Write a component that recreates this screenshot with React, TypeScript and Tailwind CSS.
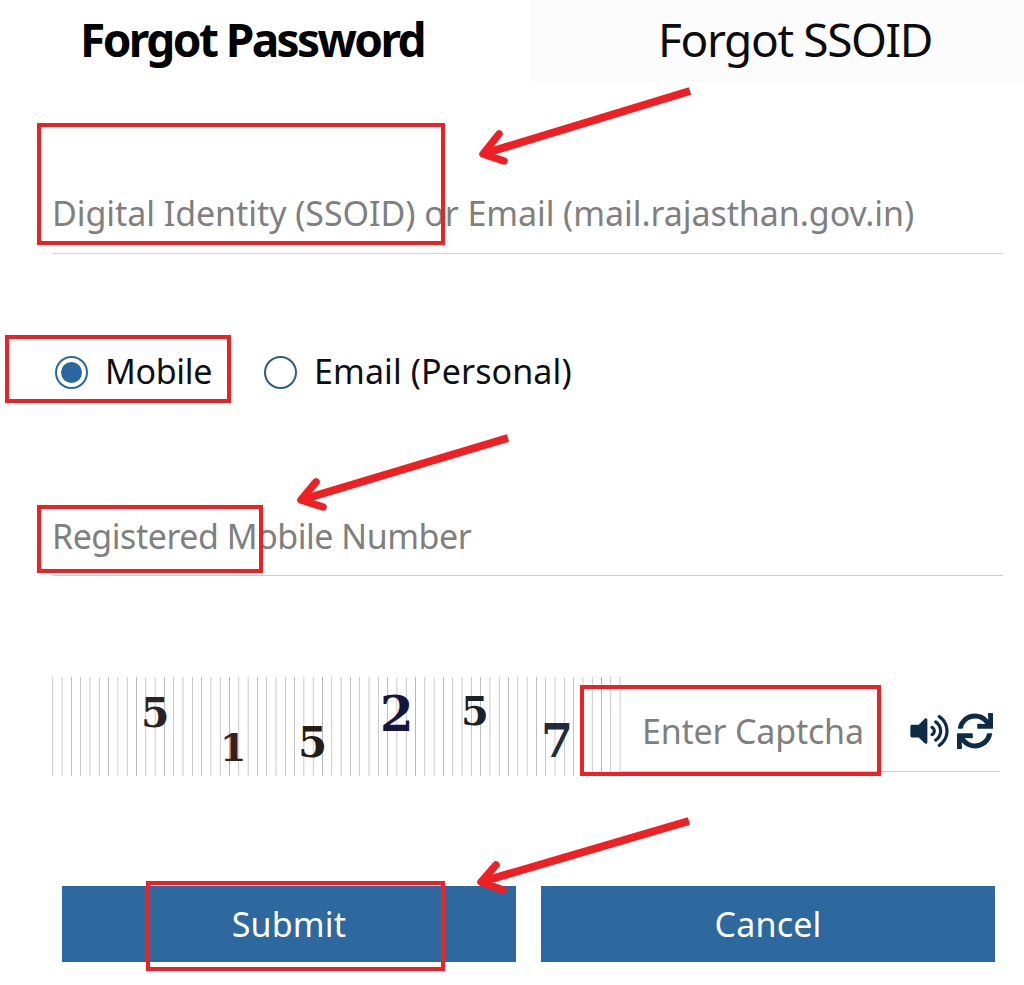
import { FaVolumeUp, FaSync } from "react-icons/fa";

function Arrow({ tail, tip, b1, b2 }: { tail: string; tip: string; b1: string; b2: string }) {
  return (
    <g fill="none" stroke="#ee2024" strokeLinecap="round" strokeLinejoin="round">
      <path d={`M${tail} L${tip}`} strokeWidth="8" strokeLinecap="butt" />
      <path d={`M${b1} L${tip} L${b2}`} strokeWidth="7.5" />
    </g>
  );
}

function Digit({ c, className }: { c: string; className: string }) {
  return <span className={`absolute font-['DejaVu_Serif',serif] font-bold leading-none tracking-normal ${className}`}>{c}</span>;
}

export default function App() {
  return (
    <div className="relative w-[1024px] h-[985px] overflow-hidden bg-white font-['Noto_Sans',sans-serif]">
      {/* Tabs */}
      <div className="flex h-[82px]">
        <div className="w-[530px] pl-[80px] pt-[10px]">
          <h1 className="text-[46px] leading-[58px] font-bold text-black tracking-[-0.0565em] whitespace-nowrap">Forgot Password</h1>
        </div>
        <div className="flex-1 bg-[#fcfcfc] pl-[128px] pt-[10px]">
          <h2 className="text-[46px] leading-[58px] font-normal text-[#0c0c0c] tracking-[-0.03em] whitespace-nowrap">Forgot SSOID</h2>
        </div>
      </div>

      {/* SSOID */}
      <div className="ml-[52px] mr-[21px] mt-[107px] h-[65px] border-b border-[#d4d6d8] flex">
        <span className="text-[34px] leading-[48px] text-[#7f7f80] tracking-[-0.002em] whitespace-nowrap">Digital Identity (SSOID) or Email (mail.rajasthan.gov.in)</span>
      </div>

      {/* Radios */}
      <div className="mt-[96px] ml-[55px] h-[44px] flex items-center">
        <span className="w-[33px] h-[33px] rounded-full border-2 border-[#2b679f] flex items-center justify-center">
          <span className="w-[21px] h-[21px] rounded-full bg-[#2b679f]" />
        </span>
        <span className="ml-[17px] pb-[2px] text-[34px] leading-[44px] text-[#0c0f14] tracking-[-0.01em]">Mobile</span>
        <span className="ml-[52px] w-[33px] h-[33px] rounded-full border-2 border-[#2b5d85]" />
        <span className="ml-[17px] pb-[2px] text-[34px] leading-[44px] text-[#0c0f14] tracking-[0.003em] whitespace-nowrap">Email (Personal)</span>
      </div>

      {/* Mobile number */}
      <div className="ml-[52px] mr-[21px] mt-[117px] h-[65px] border-b border-[#c9cbcc]">
        <span className="block text-[34px] leading-[50px] text-[#7f7f80] tracking-[-0.014em] whitespace-nowrap">Registered Mobile Number</span>
      </div>

      {/* Captcha */}
      <div className="mt-[101px] ml-[52px] mr-[24px] h-[99px] flex">
        <div className="relative w-[569px] h-[99px] bg-[repeating-linear-gradient(90deg,#ffffff_0,#b8b8b8_0.8px,#ffffff_1.6px,#ffffff_9.3px)]">
          <Digit c="5" className="left-[89px] top-[16px] text-[41px] text-[#2a2324]" />
          <Digit c="1" className="left-[168px] top-[52px] text-[38px] text-[#35201d]" />
          <Digit c="5" className="left-[246px] top-[45px] text-[42px] text-[#221d18]" />
          <Digit c="2" className="left-[328px] top-[13px] text-[48px] text-[#14163f]" />
          <Digit c="5" className="left-[409px] top-[14px] text-[40px] text-[#1b2029]" />
          <Digit c="7" className="left-[489px] top-[41px] text-[46px] text-[#222b3d]" />
        </div>
        <div className="flex-1 flex items-start">
          <div className="flex-1 h-[95px] border-b border-[#c9cbcc] flex items-center relative">
            <span className="absolute left-[21px] top-[31px] text-[34px] leading-[46px] text-[#7f7f80] tracking-[-0.006em] whitespace-nowrap">Enter Captcha</span>
            <div className="ml-auto mr-[7px] mt-[14px] flex items-center gap-[8px] text-[#0e2c46]">
              <FaVolumeUp className="w-[39px] h-[34px]" />
              <FaSync className="w-[36px] h-[36px]" />
            </div>
          </div>
        </div>
      </div>

      {/* Buttons */}
      <div className="mt-[110px] ml-[62px] flex gap-[25px]">
        <button className="w-[454px] h-[76px] bg-[#2d689f] text-white text-[34px] tracking-[0.005em]">Submit</button>
        <button className="w-[454px] h-[76px] bg-[#2d689f] text-white text-[34px] tracking-[0.005em]">Cancel</button>
      </div>

      {/* Annotations */}
      <div className="absolute left-[37px] top-[123px] w-[408px] h-[122px] border-[4px] border-[#ee2024]" />
      <div className="absolute left-[5px] top-[335px] w-[226px] h-[68px] border-[4px] border-[#ee2024]" />
      <div className="absolute left-[37px] top-[505px] w-[226px] h-[68px] border-[4px] border-[#ee2024]" />
      <div className="absolute left-[580px] top-[685px] w-[301px] h-[91px] border-[4px] border-[#ee2024]" />
      <div className="absolute left-[146px] top-[881px] w-[299px] h-[90px] border-[4px] border-[#ee2024]" />
      <svg className="absolute left-0 top-0 pointer-events-none" width="1024" height="985" viewBox="0 0 1024 985">
        <Arrow tail="690,91" tip="483,154" b1="499,134" b2="504,161" />
        <Arrow tail="508,438" tip="301,500" b1="316,482" b2="323,507" />
        <Arrow tail="689,821" tip="481,882" b1="496,865" b2="503,890" />
      </svg>
    </div>
  );
}
